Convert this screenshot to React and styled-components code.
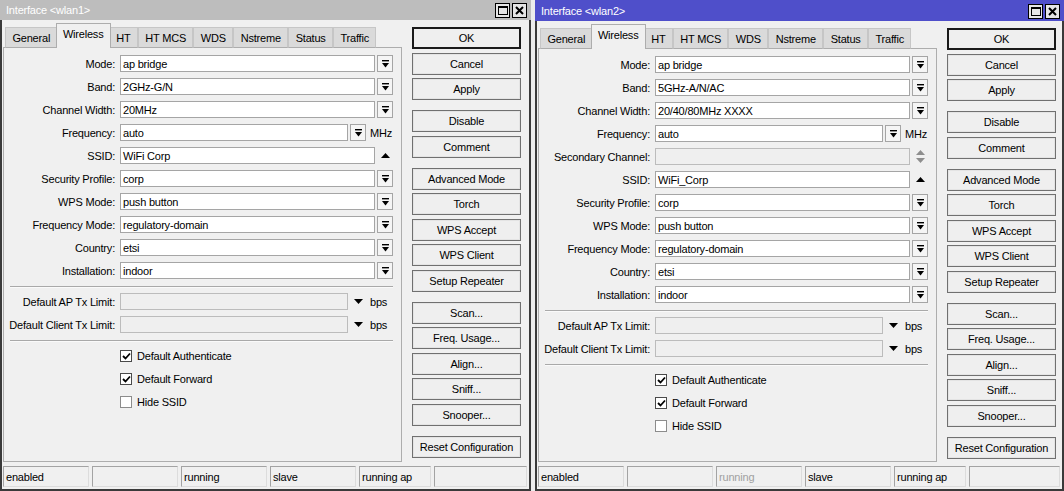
import React from 'react';
import styled, { createGlobalStyle } from 'styled-components';

const Global = createGlobalStyle`
  html, body { margin: 0; padding: 0; background: #e8e8e8; }
  body {
    font-family: "Liberation Sans", Arial, sans-serif;
    font-size: 11px;
    letter-spacing: -0.2px;
    color: #000;
  }
  #root { width: 1064px; height: 491px; overflow: hidden; }
`;

const Desktop = styled.div`
  display: flex;
  gap: 4px;
  width: 1064px;
  height: 491px;
  background: #ececec;
`;

const Window = styled.div`
  width: ${p => p.$w}px;
  height: 491px;
  box-sizing: border-box;
  display: flex;
  flex-direction: column;
  background: #f0f0f0;
  border: 2px solid #3a3a3a;
  border-top: none;
`;

const TitleBar = styled.div`
  height: ${p => p.$h}px;
  margin: 0 -2px;
  padding: 0 4px 0 6px;
  box-sizing: border-box;
  display: flex;
  align-items: center;
  justify-content: space-between;
  background: ${p => p.$bg};
  color: #fff;
  flex-shrink: 0;
`;

const TitleText = styled.span`
  white-space: nowrap;
`;

const WinControls = styled.div`
  display: flex;
  gap: 2px;
  align-self: ${p => (p.$end ? 'flex-end' : 'center')};
  margin-bottom: ${p => (p.$end ? '2px' : '0')};
`;

const WinBtn = styled.div`
  width: 15px;
  height: 15px;
  box-sizing: border-box;
  border: 1px solid #000;
  background: #e6e6e6;
  display: flex;
  align-items: center;
  justify-content: center;
`;

const Body = styled.div`
  flex: 1;
  min-height: 0;
  display: flex;
  flex-direction: column;
  padding: 3px 0 2px 1px;
`;

const Main = styled.div`
  flex: 1;
  min-height: 0;
  display: flex;
  gap: 10px;
`;

const LeftCol = styled.div`
  width: 399px;
  display: flex;
  flex-direction: column;
`;

const TabStrip = styled.div`
  display: flex;
  align-items: flex-end;
  height: 25px;
  padding-left: 2px;
  margin-bottom: -1px;
  position: relative;
  z-index: 1;
`;

const Tab = styled.div`
  height: ${p => (p.$active ? 25 : 21)}px;
  box-sizing: border-box;
  padding: 0 6.4px;
  margin: ${p => (p.$active ? '0 -2px' : '0')};
  display: flex;
  align-items: ${p => (p.$active ? 'flex-start' : 'center')};
  padding-top: ${p => (p.$active ? '4px' : '0')};
  background: ${p => (p.$active ? '#f0f0f0' : '#dadada')};
  border: 1px solid ${p => (p.$active ? '#adadad' : '#c6c6c6')};
  border-bottom: ${p => (p.$active ? 'none' : '1px solid #adadad')};
  position: relative;
  z-index: ${p => (p.$active ? 2 : 1)};
  white-space: nowrap;
`;

const Panel = styled.div`
  flex: 1;
  border: 1px solid #adadad;
  background: #f0f0f0;
  padding: 7px 8px 0 0;
  display: flex;
  flex-direction: column;
  gap: 6px;
`;

const Row = styled.div`
  display: grid;
  grid-template-columns: 111px 1fr;
  column-gap: 5px;
  align-items: center;
  height: 17px;
`;

const Label = styled.div`
  text-align: right;
  white-space: nowrap;
`;

const Field = styled.div`
  display: flex;
  align-items: center;
  gap: 2px;
  height: 17px;
`;

const Input = styled.div`
  flex: 1;
  height: 17px;
  box-sizing: border-box;
  border: 1px solid ${p => (p.$disabled ? '#bcbcbc' : '#a5a5a5')};
  background: ${p => (p.$disabled ? '#efefef' : '#fff')};
  padding: 0 2px;
  display: flex;
  align-items: center;
  white-space: nowrap;
  overflow: hidden;
`;

const DropBtn = styled.div`
  width: 16px;
  height: 17px;
  box-sizing: border-box;
  border: 1px solid #a5a5a5;
  background: #f5f5f5;
  display: flex;
  align-items: center;
  justify-content: center;
  flex-shrink: 0;
`;

const Slot = styled.div`
  width: 16px;
  height: 17px;
  display: flex;
  align-items: center;
  justify-content: center;
  flex-shrink: 0;
`;

const Unit = styled.div`
  width: 25px;
  padding-left: 2px;
  box-sizing: border-box;
  flex-shrink: 0;
  white-space: nowrap;
`;

const Separator = styled.div`
  height: 1px;
  background: #a9a9a9;
  margin: 1px 0 0 6px;
  box-shadow: 0 1px 0 #fafafa;
`;

const CheckLine = styled.div`
  display: flex;
  align-items: center;
  gap: 5px;
`;

const Box = styled.div`
  width: 12px;
  height: 12px;
  box-sizing: border-box;
  border: 1px solid ${p => (p.$checked ? '#4a4a4a' : '#8c8c8c')};
  background: #fff;
  display: flex;
  align-items: center;
  justify-content: center;
`;

const ButtonCol = styled.div`
  width: 109px;
  padding-top: 4px;
  display: flex;
  flex-direction: column;
  gap: 10px;
`;

const ButtonGroup = styled.div`
  display: flex;
  flex-direction: column;
  gap: 3.5px;
`;

const Button = styled.div`
  height: 22px;
  box-sizing: border-box;
  border: 1px solid ${p => (p.$default ? '#1a1a1a' : '#707070')};
  box-shadow: ${p => (p.$default ? 'inset 0 0 0 1px #1a1a1a' : 'inset 0 0 0 1px #e4e4e4')};
  background: #efefef;
  display: flex;
  align-items: center;
  justify-content: center;
  white-space: nowrap;
`;

const StatusBar = styled.div`
  display: flex;
  gap: 3px;
  height: 21px;
  margin-top: 4px;
  padding-right: 2px;
`;

const StatusCell = styled.div`
  width: ${p => (p.$w ? `${p.$w}px` : 'auto')};
  flex: ${p => (p.$w ? '0 0 auto' : '1')};
  box-sizing: border-box;
  border-style: solid;
  border-width: 1px;
  border-color: #a3a3a3 #dcdcdc #dcdcdc #a3a3a3;
  padding-left: 2px;
  display: flex;
  align-items: center;
  color: ${p => (p.$muted ? '#a0a0a0' : '#000')};
  white-space: nowrap;
`;

/* ---------- icons ---------- */

const DropIcon = () => (
  <svg width="7" height="8" viewBox="0 0 7 8">
    <rect x="0" y="0" width="7" height="1.4" fill="#000" />
    <polygon points="0,3 7,3 3.5,7.5" fill="#000" />
  </svg>
);

const UpTriangle = () => (
  <svg width="9" height="5" viewBox="0 0 9 5">
    <polygon points="0,5 9,5 4.5,0" fill="#000" />
  </svg>
);

const DownTriangle = () => (
  <svg width="9" height="5" viewBox="0 0 9 5">
    <polygon points="0,0 9,0 4.5,5" fill="#000" />
  </svg>
);

const Spinner = () => (
  <svg width="9" height="13" viewBox="0 0 9 13">
    <polygon points="0,5 9,5 4.5,0" fill="#8e8e8e" />
    <polygon points="0,8 9,8 4.5,13" fill="#8e8e8e" />
  </svg>
);

const CheckMark = () => (
  <svg width="9" height="8" viewBox="0 0 9 8">
    <polyline points="1,4 3.5,6.5 8,1.5" fill="none" stroke="#000" strokeWidth="1.8" />
  </svg>
);

const MaxIcon = () => (
  <svg width="10" height="9" viewBox="0 0 10 9">
    <rect x="0.5" y="0.5" width="9" height="8" fill="none" stroke="#000" strokeWidth="1" />
    <rect x="0" y="0" width="10" height="2" fill="#000" />
  </svg>
);

const CloseIcon = () => (
  <svg width="9" height="9" viewBox="0 0 9 9">
    <path d="M1 1 L8 8 M8 1 L1 8" stroke="#000" strokeWidth="2" />
  </svg>
);

/* ---------- data ---------- */

const TABS = ['General', 'Wireless', 'HT', 'HT MCS', 'WDS', 'Nstreme', 'Status', 'Traffic'];

const BUTTON_GROUPS = [
  ['OK', 'Cancel', 'Apply'],
  ['Disable', 'Comment'],
  ['Advanced Mode', 'Torch', 'WPS Accept', 'WPS Client', 'Setup Repeater'],
  ['Scan...', 'Freq. Usage...', 'Align...', 'Sniff...', 'Snooper...'],
  ['Reset Configuration'],
];

const makeRows = (band, width, ssid, secondary) => [
  { label: 'Mode', value: 'ap bridge', kind: 'drop' },
  { label: 'Band', value: band, kind: 'drop' },
  { label: 'Channel Width', value: width, kind: 'drop' },
  { label: 'Frequency', value: 'auto', kind: 'dropUnit', unit: 'MHz' },
  ...(secondary ? [{ label: 'Secondary Channel', value: '', kind: 'spin' }] : []),
  { label: 'SSID', value: ssid, kind: 'up' },
  { label: 'Security Profile', value: 'corp', kind: 'drop' },
  { label: 'WPS Mode', value: 'push button', kind: 'drop' },
  { label: 'Frequency Mode', value: 'regulatory-domain', kind: 'drop' },
  { label: 'Country', value: 'etsi', kind: 'drop' },
  { label: 'Installation', value: 'indoor', kind: 'drop' },
];

const TX_ROWS = ['Default AP Tx Limit', 'Default Client Tx Limit'];

const CHECKS = [
  { label: 'Default Authenticate', checked: true },
  { label: 'Default Forward', checked: true },
  { label: 'Hide SSID', checked: false },
];

const STATUS_WIDTHS = [86, 86, 86, 86, 72, null];

/* ---------- parts ---------- */

function FieldFor({ row }) {
  switch (row.kind) {
    case 'drop':
      return (
        <Field>
          <Input>{row.value}</Input>
          <DropBtn><DropIcon /></DropBtn>
        </Field>
      );
    case 'dropUnit':
      return (
        <Field>
          <Input>{row.value}</Input>
          <DropBtn><DropIcon /></DropBtn>
          <Unit>{row.unit}</Unit>
        </Field>
      );
    case 'up':
      return (
        <Field>
          <Input>{row.value}</Input>
          <Slot><UpTriangle /></Slot>
        </Field>
      );
    case 'spin':
      return (
        <Field>
          <Input $disabled />
          <Slot><Spinner /></Slot>
        </Field>
      );
    default:
      return null;
  }
}

function InterfaceWindow({ name, width, titleH, titleBg, controlsEnd, rows, status }) {
  return (
    <Window $w={width}>
      <TitleBar $h={titleH} $bg={titleBg}>
        <TitleText>Interface &lt;{name}&gt;</TitleText>
        <WinControls $end={controlsEnd}>
          <WinBtn><MaxIcon /></WinBtn>
          <WinBtn><CloseIcon /></WinBtn>
        </WinControls>
      </TitleBar>
      <Body>
        <Main>
          <LeftCol>
            <TabStrip>
              {TABS.map(t => (
                <Tab key={t} $active={t === 'Wireless'}>{t}</Tab>
              ))}
            </TabStrip>
            <Panel>
              {rows.map(r => (
                <Row key={r.label}>
                  <Label>{r.label}:</Label>
                  <FieldFor row={r} />
                </Row>
              ))}
              <Separator />
              {TX_ROWS.map(l => (
                <Row key={l}>
                  <Label>{l}:</Label>
                  <Field>
                    <Input $disabled />
                    <Slot><DownTriangle /></Slot>
                    <Unit>bps</Unit>
                  </Field>
                </Row>
              ))}
              <Separator />
              {CHECKS.map(c => (
                <Row key={c.label}>
                  <span />
                  <CheckLine>
                    <Box $checked={c.checked}>{c.checked && <CheckMark />}</Box>
                    {c.label}
                  </CheckLine>
                </Row>
              ))}
            </Panel>
          </LeftCol>
          <ButtonCol>
            {BUTTON_GROUPS.map((g, i) => (
              <ButtonGroup key={i}>
                {g.map(b => (
                  <Button key={b} $default={b === 'OK'}>{b}</Button>
                ))}
              </ButtonGroup>
            ))}
          </ButtonCol>
        </Main>
        <StatusBar>
          {status.map((s, i) => (
            <StatusCell key={i} $w={STATUS_WIDTHS[i]} $muted={s.muted}>{s.text}</StatusCell>
          ))}
        </StatusBar>
      </Body>
    </Window>
  );
}

export default function App() {
  return (
    <>
      <Global />
      <Desktop>
        <InterfaceWindow
          name="wlan1"
          width={531}
          titleH={20}
          titleBg="#bdbdbd"
          rows={makeRows('2GHz-G/N', '20MHz', 'WiFi Corp', false)}
          status={[
            { text: 'enabled' },
            { text: '' },
            { text: 'running' },
            { text: 'slave' },
            { text: 'running ap' },
            { text: '' },
          ]}
        />
        <InterfaceWindow
          name="wlan2"
          width={529}
          titleH={21}
          titleBg="#4f4fca"
          controlsEnd
          rows={makeRows('5GHz-A/N/AC', '20/40/80MHz XXXX', 'WiFi_Corp', true)}
          status={[
            { text: 'enabled' },
            { text: '' },
            { text: 'running', muted: true },
            { text: 'slave' },
            { text: 'running ap' },
            { text: '' },
          ]}
        />
      </Desktop>
    </>
  );
}
